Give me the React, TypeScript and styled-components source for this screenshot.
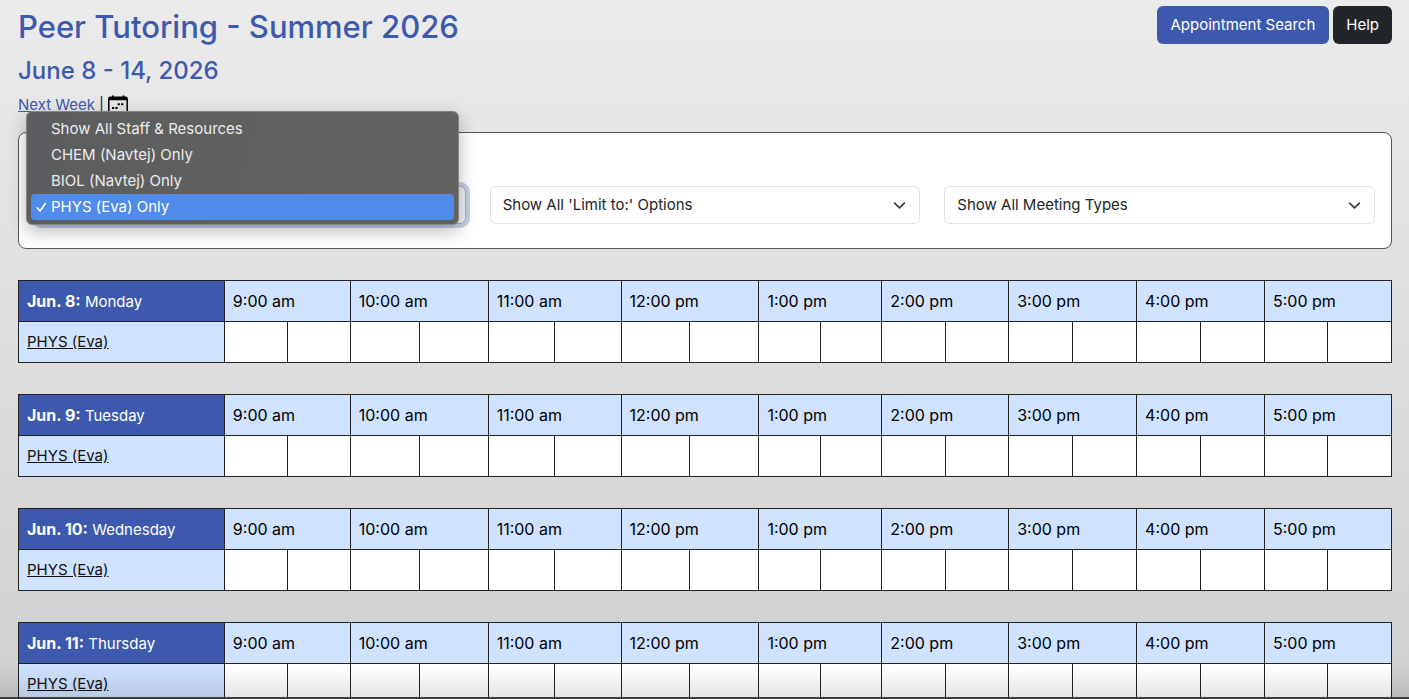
import React from "react";
import styled, { createGlobalStyle } from "styled-components";

const blue = "#3d59ae";
const pale = "#cfe2ff";
const ink = "#212529";

const GlobalStyle = createGlobalStyle`
  *, *::before, *::after { box-sizing: border-box; }
  html { height: 100%; overflow: hidden; }
  body {
    margin: 0;
    min-height: 100%;
    background: linear-gradient(#ebebeb, #d0d0d0) fixed;
    color: ${ink};
    font-family: Inter, "Liberation Sans", sans-serif;
    font-size: 15px;
    line-height: 24px;
  }
`;

const Page = styled.main`
  padding: 6px 17px 0 18px;
`;

const Header = styled.header`
  display: flex;
  justify-content: space-between;
  align-items: flex-start;
`;

const Title = styled.h1`
  margin: 0 0 6px;
  color: ${blue};
  font-size: 31px;
  line-height: 42px;
  font-weight: 500;
`;

const Week = styled.h2`
  margin: 0 0 4px;
  color: ${blue};
  font-size: 24px;
  line-height: 34px;
  font-weight: 500;
`;

const Actions = styled.div`
  display: flex;
  gap: 4px;
`;

const Button = styled.button<{ $dark?: boolean }>`
  height: 38px;
  padding: ${(p) => (p.$dark ? "0 13px" : "0 14px")};
  border: 0;
  border-radius: 6px;
  background: ${(p) => (p.$dark ? ink : blue)};
  color: #fff;
  font: inherit;
`;

const WeekNav = styled.nav`
  display: flex;
  align-items: center;
  gap: 4px;
  height: 26px;
`;

const WeekLink = styled.a`
  color: ${blue};
`;

const CalendarButton = styled.button`
  display: flex;
  padding: 0;
  border: 0;
  background: none;
  color: #000;
`;

const Filters = styled.section`
  position: relative;
  display: grid;
  grid-template-columns: repeat(3, 1fr);
  gap: 24px;
  margin: 14px 0 31px;
  padding: 53px 16px 24px;
  border: 1px solid #55575a;
  border-radius: 8px;
  background: #fff;
`;

const SelectBox = styled.div`
  display: grid;
  align-items: center;

  > * { grid-area: 1 / 1; }
  > svg { justify-self: end; margin-right: 14px; pointer-events: none; }
`;

const Select = styled.select<{ $focused?: boolean }>`
  appearance: none;
  width: 100%;
  height: 38px;
  padding: 0 36px 0 12px;
  border: 1px solid ${(p) => (p.$focused ? "#9eacd7" : "#dee2e6")};
  border-radius: 6px;
  outline: none;
  background: ${(p) => (p.$focused ? "#f1f1f1" : "#fff")};
  box-shadow: ${(p) => (p.$focused ? "0 0 0 4px #c5cde7" : "none")};
  color: ${ink};
  font: inherit;
`;

const Menu = styled.ul`
  position: absolute;
  z-index: 2;
  top: -22px;
  left: 7px;
  width: calc((100% - 80px) / 3 + 2px);
  margin: 0;
  padding: 4px;
  border: 1px solid #858585;
  border-radius: 6px;
  background: linear-gradient(100deg, #5b5d60, #60605e 50%, #626260);
  box-shadow: 0 6px 18px rgba(0, 0, 0, 0.28);
  color: #ececec;
  list-style: none;
`;

const Option = styled.li<{ $selected?: boolean }>`
  display: flex;
  align-items: center;
  height: 26px;
  line-height: 26px;
  padding-left: ${(p) => (p.$selected ? "5px" : "20px")};
  border-radius: 4px;
  background: ${(p) => (p.$selected ? "#4f8bea" : "transparent")};
  color: ${(p) => (p.$selected ? "#fff" : "inherit")};

  > svg { width: 12px; margin-right: 3px; }
`;

const Schedule = styled.table`
  width: 100%;
  margin-bottom: 31px;
  border-collapse: collapse;
  table-layout: fixed;

  th, td {
    height: 41px;
    padding: 0 8px;
    border: 1px solid #222;
    text-align: left;
    font-weight: 400;
  }
`;

const DayCell = styled.th`
  background: ${blue};
  color: #fff;

  > strong { font-size: 16px; }
`;

const HourCell = styled.th`
  background: ${pale};
  color: #000;
  font-size: 16px;
`;

const StaffCell = styled.th`
  background: ${pale};
`;

const StaffLink = styled.a`
  color: #111;
`;

const Slot = styled.td`
  background: #fff;
`;

const BottomEdge = styled.div`
  position: fixed;
  z-index: 3;
  right: 0;
  bottom: 0;
  left: 0;
  height: 34px;
  border-bottom: 2px solid #3c3c3e;
  background: linear-gradient(transparent, rgba(0, 0, 0, 0.1));
  pointer-events: none;
`;

const Chevron = () => (
  <svg width="13" height="13" viewBox="0 0 16 16" fill="none" stroke="#343a40" strokeWidth="2" strokeLinecap="round" strokeLinejoin="round" aria-hidden="true">
    <path d="m2 5 6 6 6-6" />
  </svg>
);

const Check = () => (
  <svg width="12" height="12" viewBox="0 0 12 12" fill="none" stroke="#fff" strokeWidth="1.7" strokeLinecap="round" strokeLinejoin="round" aria-hidden="true">
    <path d="M1.4 7 4 10 9.4 2.4" />
  </svg>
);

const Calendar = () => (
  <svg width="20" height="20" viewBox="0 0 20 20" aria-hidden="true">
    <rect x="0.8" y="2.3" width="18.4" height="16.9" rx="1.6" fill="none" stroke="currentColor" strokeWidth="1.5" />
    <path d="M1 2h18v3.2H1zM4 .5h2V3H4zM14.5.5h2V3h-2z" fill="currentColor" />
    <path d="M9.6 8.3h2.2v2H9.6zM13.2 8.3h2.2v2h-2.2zM4 12h2.2v2H4zM7.4 12h2.2v2H7.4z" fill="currentColor" />
  </svg>
);

const staffOptions = [
  "Show All Staff & Resources",
  "CHEM (Navtej) Only",
  "BIOL (Navtej) Only",
  "PHYS (Eva) Only",
];
const selectedStaff = "PHYS (Eva) Only";

const days = [
  { date: "Jun. 8:", name: "Monday" },
  { date: "Jun. 9:", name: "Tuesday" },
  { date: "Jun. 10:", name: "Wednesday" },
  { date: "Jun. 11:", name: "Thursday" },
];

const hours = ["9:00 am", "10:00 am", "11:00 am", "12:00 pm", "1:00 pm", "2:00 pm", "3:00 pm", "4:00 pm", "5:00 pm"];

// Relative widths: the staff column, then two half-hour slots per hour.
const columns = [206, 63, 63, 69, 69, 66, 67, 69, 69, 62, 61, 64, 63, 64, 64, 64, 64, 63, 64];
const total = columns.reduce((a, b) => a + b, 0);

export default function App() {
  return (
    <>
      <GlobalStyle />
      <Page>
        <Header>
          <Title>Peer Tutoring - Summer 2026</Title>
          <Actions>
            <Button type="button">Appointment Search</Button>
            <Button type="button" $dark>Help</Button>
          </Actions>
        </Header>
        <Week>June 8 - 14, 2026</Week>
        <WeekNav aria-label="Week">
          <WeekLink href="#next">Next Week</WeekLink>
          <span>|</span>
          <CalendarButton type="button" aria-label="Choose a date">
            <Calendar />
          </CalendarButton>
        </WeekNav>

        <Filters aria-label="Filters">
          <SelectBox>
            <Select $focused aria-label="Staff and resources" defaultValue={selectedStaff}>
              {staffOptions.map((o) => <option key={o}>{o}</option>)}
            </Select>
          </SelectBox>
          <SelectBox>
            <Select aria-label="Limit to">
              <option>Show All 'Limit to:' Options</option>
            </Select>
            <Chevron />
          </SelectBox>
          <SelectBox>
            <Select aria-label="Meeting types">
              <option>Show All Meeting Types</option>
            </Select>
            <Chevron />
          </SelectBox>
          <Menu role="listbox" aria-label="Staff and resources">
            {staffOptions.map((o) => (
              <Option key={o} role="option" aria-selected={o === selectedStaff} $selected={o === selectedStaff}>
                {o === selectedStaff && <Check />}
                {o}
              </Option>
            ))}
          </Menu>
        </Filters>

        {days.map((day) => (
          <Schedule key={day.date}>
            <colgroup>
              {columns.map((w, i) => (
                <col key={i} style={{ width: `${(w / total) * 100}%` }} />
              ))}
            </colgroup>
            <thead>
              <tr>
                <DayCell scope="col"><strong>{day.date}</strong> {day.name}</DayCell>
                {hours.map((h) => <HourCell key={h} scope="col" colSpan={2}>{h}</HourCell>)}
              </tr>
            </thead>
            <tbody>
              <tr>
                <StaffCell scope="row"><StaffLink href="#phys">PHYS (Eva)</StaffLink></StaffCell>
                {columns.slice(1).map((_, i) => <Slot key={i} />)}
              </tr>
            </tbody>
          </Schedule>
        ))}
      </Page>
      <BottomEdge />
    </>
  );
}
